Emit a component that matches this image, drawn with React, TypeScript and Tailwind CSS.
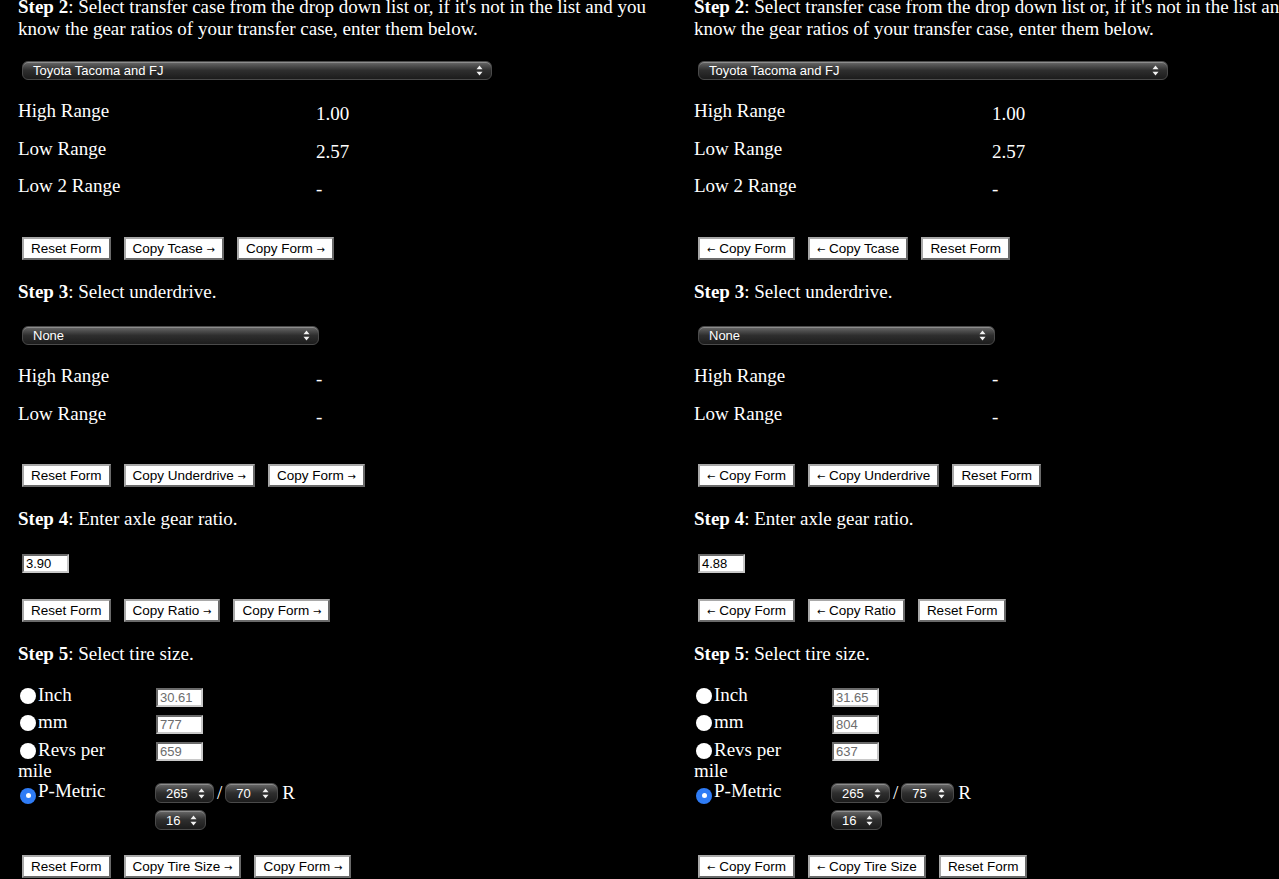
import React from 'react';

const serif = { fontFamily: '"Liberation Serif", "Times New Roman", serif' };

function Arrows() {
  return (
    <svg width="7" height="11" viewBox="0 0 7 11" className="shrink-0">
      <path d="M3.5 0.5 L6.5 4.2 L0.5 4.2 Z" fill="#f2f2f2" />
      <path d="M3.5 10.5 L6.5 6.8 L0.5 6.8 Z" fill="#f2f2f2" />
    </svg>
  );
}

function FakeSelect({ label, width, height = 19 }: { label: string; width: number; height?: number }) {
  return (
    <div
      className="flex items-center justify-between rounded-[6px] border border-[#4a4a4a] bg-gradient-to-b from-[#6a6a6a] via-[#2e2e2e] to-[#1c1c1c] pl-[10px] pr-[8px] text-[13px] leading-none text-white shadow-[inset_0_1px_0_rgba(255,255,255,0.25)] font-['Liberation_Sans',Arial,sans-serif]"
      style={{ width, height }}
    >
      <span>{label}</span>
      <Arrows />
    </div>
  );
}

// splits the arrow off so it can get a shorter glyph, like the reference
function BtnLabel({ text }: { text: string }) {
  if (text.startsWith('← ')) {
    return (
      <>
        <span className="font-['DejaVu_Sans',sans-serif] text-[10px]">←</span> {text.slice(2)}
      </>
    );
  }
  if (text.endsWith(' →')) {
    return (
      <>
        {text.slice(0, -2)} <span className="font-['DejaVu_Sans',sans-serif] text-[10px]">→</span>
      </>
    );
  }
  return <>{text}</>;
}

function Btn({ text }: { text: string }) {
  return (
    <button className="h-[23px] bg-white px-[7px] text-[13.5px] leading-none text-black border-2 border-t-[#a8a8a8] border-l-[#a8a8a8] border-b-[#6a6a6a] border-r-[#6a6a6a] font-['Liberation_Sans',Arial,sans-serif] whitespace-nowrap">
      <BtnLabel text={text} />
    </button>
  );
}

function BtnRow({ items }: { items: string[] }) {
  return (
    <div className="flex gap-[13px] pl-[4px]">
      {items.map((t) => (
        <Btn key={t} text={t} />
      ))}
    </div>
  );
}

function TextBox({ value, width, dim }: { value: string; width: number; dim?: boolean }) {
  return (
    <div
      className={`h-[19px] bg-white pl-[2px] text-[13px] leading-[15px] border-2 border-t-[#6a6a6a] border-l-[#6a6a6a] border-b-[#c8c8c8] border-r-[#c8c8c8] font-['Liberation_Sans',Arial,sans-serif] ${dim ? 'text-[#6d6d6d]' : 'text-black'}`}
      style={{ width }}
    >
      {value}
    </div>
  );
}

function Row({ label, value }: { label: string; value: string }) {
  return (
    <div className="flex h-[37.5px] items-start">
      <div className="w-[298px] leading-[22px]">{label}</div>
      <div className="pt-[3px] leading-[22px]">{value}</div>
    </div>
  );
}

function Heading({ n, text }: { n: number; text: string }) {
  return (
    <p className="leading-[22px]">
      <b>Step {n}</b>: {text}
    </p>
  );
}

function Radio({ on }: { on?: boolean }) {
  return (
    <span
      className={`mx-[2px] mb-[-2px] inline-flex h-[16px] w-[16px] items-center justify-center rounded-full align-[-1px] ${on ? 'bg-[#2f7cf6]' : 'bg-white'}`}
    >
      {on && <span className="h-[5px] w-[5px] rounded-full bg-white" />}
    </span>
  );
}

interface ColumnData {
  tcaseBtns: string[];
  underBtns: string[];
  ratio: string;
  ratioBtns: string[];
  inch: string;
  mm: string;
  revs: string;
  aspect: string;
  tireBtns: string[];
}

function Column({ d }: { d: ColumnData }) {
  return (
    <div className="w-[676px] shrink-0 pl-[18px] pr-[20px] text-[19px] text-white" style={serif}>
      <div className="mt-[-4px]">
        <Heading n={2} text="Select transfer case from the drop down list or, if it's not in the list and you know the gear ratios of your transfer case, enter them below." />
      </div>
      <div className="mt-[21px] pl-[4px]">
        <FakeSelect label="Toyota Tacoma and FJ" width={470} />
      </div>
      <div className="mt-[20px]">
        <Row label="High Range" value="1.00" />
        <Row label="Low Range" value="2.57" />
        <Row label="Low 2 Range" value="-" />
      </div>
      <div className="mt-[24.5px]">
        <BtnRow items={d.tcaseBtns} />
      </div>

      <div className="mt-[21px]">
        <Heading n={3} text="Select underdrive." />
      </div>
      <div className="mt-[23px] pl-[4px]">
        <FakeSelect label="None" width={297} />
      </div>
      <div className="mt-[20px]">
        <Row label="High Range" value="-" />
        <Row label="Low Range" value="-" />
      </div>
      <div className="mt-[24px]">
        <BtnRow items={d.underBtns} />
      </div>

      <div className="mt-[21px]">
        <Heading n={4} text="Enter axle gear ratio." />
      </div>
      <div className="mt-[24px] pl-[4px]">
        <TextBox value={d.ratio} width={47} />
      </div>
      <div className="mt-[26px]">
        <BtnRow items={d.ratioBtns} />
      </div>

      <div className="mt-[21px]">
        <Heading n={5} text="Select tire size." />
      </div>
      <div className="mt-[19px] grid grid-cols-[110px_1fr] gap-x-[28px]">
        <div className="h-[27px] leading-[22px]">
          <Radio />Inch
        </div>
        <div className="pt-[4px]">
          <TextBox value={d.inch} width={47} dim />
        </div>
        <div className="h-[27px] leading-[22px]">
          <Radio />mm
        </div>
        <div className="pt-[4px]">
          <TextBox value={d.mm} width={47} dim />
        </div>
        <div className="h-[42px] pt-[1px] leading-[21px]">
          <Radio />Revs per mile
        </div>
        <div className="pt-[4px]">
          <TextBox value={d.revs} width={47} dim />
        </div>
        <div className="leading-[22px]">
          <Radio on />P-Metric
        </div>
        <div className="pt-[3px]">
          <div className="flex items-center gap-[3px]">
            <div className="-ml-[1px]">
              <FakeSelect label="265" width={59} height={20} />
            </div>
            <span className="leading-[20px]">/</span>
            <FakeSelect label={d.aspect} width={53} height={20} />
            <span className="ml-[1px] leading-[20px]">R</span>
          </div>
          <div className="mt-[7px] -ml-[1px]">
            <FakeSelect label="16" width={51} height={20} />
          </div>
        </div>
      </div>
      <div className="mt-[25px]">
        <BtnRow items={d.tireBtns} />
      </div>
    </div>
  );
}

const left: ColumnData = {
  tcaseBtns: ['Reset Form', 'Copy Tcase →', 'Copy Form →'],
  underBtns: ['Reset Form', 'Copy Underdrive →', 'Copy Form →'],
  ratio: '3.90',
  ratioBtns: ['Reset Form', 'Copy Ratio →', 'Copy Form →'],
  inch: '30.61',
  mm: '777',
  revs: '659',
  aspect: '70',
  tireBtns: ['Reset Form', 'Copy Tire Size →', 'Copy Form →'],
};

const right: ColumnData = {
  tcaseBtns: ['← Copy Form', '← Copy Tcase', 'Reset Form'],
  underBtns: ['← Copy Form', '← Copy Underdrive', 'Reset Form'],
  ratio: '4.88',
  ratioBtns: ['← Copy Form', '← Copy Ratio', 'Reset Form'],
  inch: '31.65',
  mm: '804',
  revs: '637',
  aspect: '75',
  tireBtns: ['← Copy Form', '← Copy Tire Size', 'Reset Form'],
};

export default function App() {
  return (
    <div className="h-[879px] w-[1279px] overflow-hidden bg-black">
      <div className="flex w-[1352px]">
        <Column d={left} />
        <Column d={right} />
      </div>
    </div>
  );
}
